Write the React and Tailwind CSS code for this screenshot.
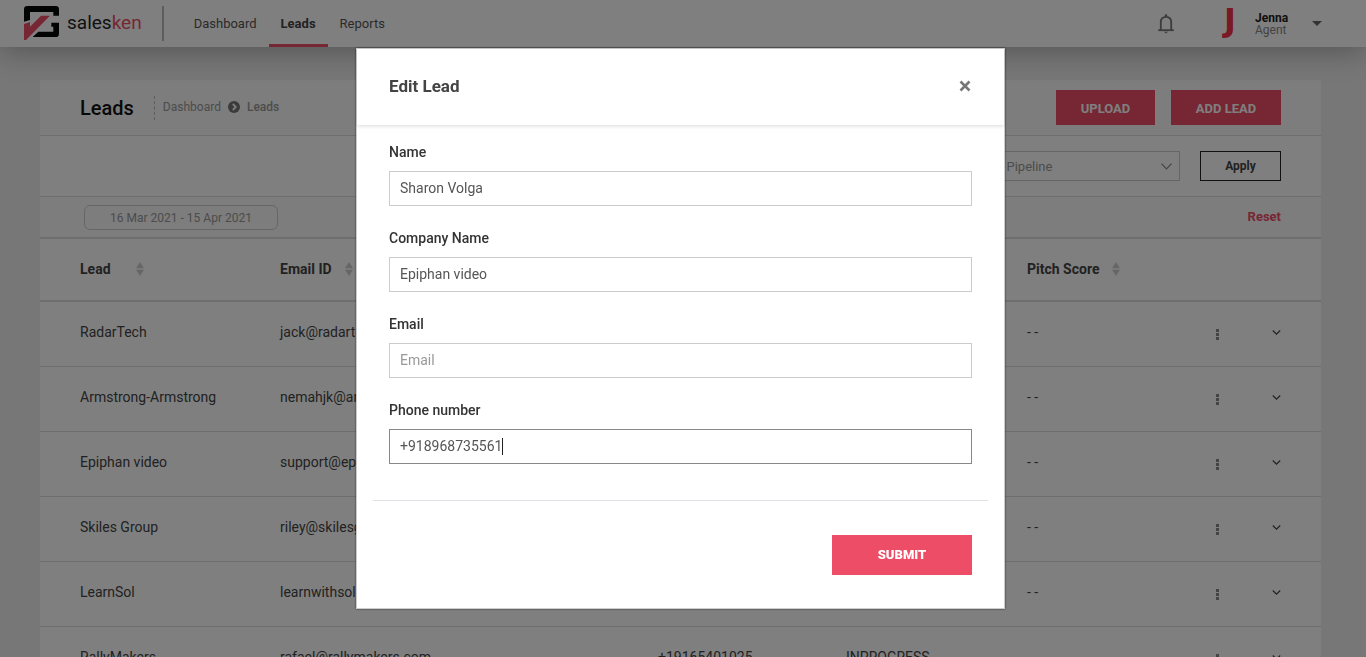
import React from "react";

const leads = [
  { name: "RadarTech", email: "jack@radartech.com", phone: "- -", status: "- -" },
  { name: "Armstrong-Armstrong", email: "nemahjk@armstrong.com", phone: "- -", status: "- -" },
  { name: "Epiphan video", email: "support@epiphan.com", phone: "- -", status: "- -" },
  { name: "Skiles Group", email: "riley@skilesgroup.com", phone: "- -", status: "- -" },
  { name: "LearnSol", email: "learnwithsol@learnsol.com", phone: "- -", status: "- -" },
  { name: "RallyMakers", email: "rafael@rallymakers.com", phone: "+19165401025", status: "INPROGRESS" },
];

function Logo() {
  return (
    <a href="#home" className="flex items-center gap-2" aria-label="salesken">
      <svg width="35" height="34" viewBox="0 0 105 102" aria-hidden="true">
        <path fill="#050808" d="M0 47V10Q0 0 10 0H95Q105 0 105 10V29H88V18H18V42Z" />
        <path fill="#050808" d="M82 50H105V83Q105 93 95 93H26L43 77H88V62H82Z" />
        <path fill="#ee4d67" d="M0 54L18 48V62L51 29H78L6 102H0Z" />
      </svg>
      <span className="text-[19px] leading-6 text-[#222]">
        sales<span className="text-[#ee4d67]">ken</span>
      </span>
    </a>
  );
}

function BellIcon() {
  return (
    <svg width="16" height="20" viewBox="0 0 16 20" fill="none" stroke="#777" strokeWidth="1.8" aria-hidden="true">
      <path d="M0.2 16.2H15.8" />
      <path d="M2.8 16V8.2C2.8 4.8 5 2.8 8 2.8S13.2 4.8 13.2 8.2V16" />
      <path d="M8 0.4V2.8" strokeWidth="2.4" />
      <path d="M6 17.8H10L8 19.6Z" fill="#777" stroke="none" />
    </svg>
  );
}

function SortIcon() {
  return (
    <svg width="8" height="14" viewBox="0 0 8 14" fill="#ccc" aria-hidden="true">
      <path d="M4 0L8 6.3H0ZM0 7.7H8L4 14Z" />
    </svg>
  );
}

function Header() {
  return (
    <header className="relative flex h-[47px] shrink-0 items-stretch bg-white pl-6 pr-11 shadow-[0_4px_30px_rgba(0,0,0,0.3)]">
      <div className="flex items-center pb-px">
        <Logo />
        <span className="ml-5 h-[35px] w-0.5 bg-[#bbb]" />
      </div>
      <nav className="ml-[18px] flex text-[13px] text-[#555]">
        <a href="#dashboard" className="flex items-center border-b-[3px] border-transparent px-3 pt-[3px]">Dashboard</a>
        <a href="#leads" className="flex items-center border-b-[3px] border-[#ee4d67] px-3 pt-[3px] font-bold text-[#444]">Leads</a>
        <a href="#reports" className="flex items-center border-b-[3px] border-transparent px-3 pt-[3px]">Reports</a>
      </nav>
      <div className="ml-auto flex items-center">
        <button type="button" aria-label="Notifications"><BellIcon /></button>
        <button type="button" className="ml-[50px] flex items-center text-left">
          <span className="w-[31px] pb-2 font-['DejaVu_Sans',sans-serif] text-[32px] font-bold leading-[38px] text-[#f5304c]">J</span>
          <span className="flex w-[57px] flex-col text-xs leading-3">
            <span className="font-bold text-[#222]">Jenna</span>
            <span className="text-[#888]">Agent</span>
          </span>
          <svg width="10" height="5" viewBox="0 0 10 5" fill="#666" aria-hidden="true"><path d="M0 0H10L5 5Z" /></svg>
        </button>
      </div>
    </header>
  );
}

function TitleBar() {
  return (
    <div className="flex h-14 items-center border-b border-[#ddd] bg-[#fafafa] px-10">
      <h1 className="text-xl font-medium text-[#111]">Leads</h1>
      <span className="ml-5 h-6 border-l border-dashed border-[#bbb]" />
      <nav aria-label="Breadcrumb" className="ml-2 flex items-center gap-[7px] pb-0.5 text-xs text-[#999]">
        <a href="#dashboard">Dashboard</a>
        <svg width="12" height="12" viewBox="0 0 12 12" aria-hidden="true">
          <circle cx="6" cy="6" r="6" fill="#777" />
          <path d="M4.8 3L7.8 6L4.8 9" fill="none" stroke="#fafafa" strokeWidth="1.8" />
        </svg>
        <a href="#leads" className="font-medium">Leads</a>
      </nav>
      <div className="ml-auto flex gap-4 text-[13px] font-bold text-white">
        <button type="button" className="h-[35px] w-[99px] bg-[#ee4d67] pt-0.5">UPLOAD</button>
        <button type="button" className="h-[35px] w-[110px] bg-[#ee4d67] pt-0.5">ADD LEAD</button>
      </div>
    </div>
  );
}

function Filters() {
  return (
    <>
      <div className="flex h-[61px] items-center justify-end gap-5 border-b border-[#ddd] px-10">
        <div className="relative flex items-center">
          <select aria-label="Pipeline" className="h-[30px] w-[200px] appearance-none border border-[#ccc] bg-transparent pl-2 pt-0.5 text-[13px] text-[#999]">
            <option>By Pipeline</option>
          </select>
          <svg className="pointer-events-none absolute right-2" width="11" height="7" viewBox="0 0 11 7" fill="none" stroke="#888" strokeWidth="1.2" aria-hidden="true">
            <path d="M0.5 0.7L5.5 5.8L10.5 0.7" />
          </svg>
        </div>
        <button type="button" className="h-[30px] w-[81px] border border-[#222] text-xs font-bold text-[#444]">Apply</button>
      </div>
      <div className="flex h-[42px] items-center justify-between border-b-2 border-[#ddd] bg-[#fafafa] pl-11 pr-10">
        <button type="button" className="h-[25px] w-[194px] rounded-md border border-[#ccc] pt-px text-xs text-[#999]">
          16 Mar 2021 - 15 Apr 2021
        </button>
        <button type="button" className="text-[13px] font-bold text-[#ee4d67]">Reset</button>
      </div>
    </>
  );
}

function HeadCell({ label, wide, first }) {
  return (
    <th scope="col" className={first ? "pb-1 pl-10 font-bold" : "pb-1 font-bold"}>
      <span className={wide ? "flex items-center gap-[25px]" : "flex items-center gap-[13px]"}>
        {label}
        <SortIcon />
      </span>
    </th>
  );
}

function LeadsTable() {
  return (
    <table className="w-full table-fixed border-collapse text-left text-sm text-[#444]">
      <colgroup>
        <col className="w-[240px]" />
        <col className="w-[378px]" />
        <col className="w-[188px]" />
        <col />
        <col className="w-[175px]" />
        <col className="w-[59px]" />
        <col className="w-[60px]" />
      </colgroup>
      <thead>
        <tr className="h-[63px] shadow-[inset_0_-2px_#ddd]">
          <HeadCell label="Lead" wide first />
          <HeadCell label="Email ID" />
          <HeadCell label="Phone" />
          <HeadCell label="Status" />
          <HeadCell label="Pitch Score" />
          <th aria-label="Actions" />
          <th aria-label="Expand" />
        </tr>
      </thead>
      <tbody>
        {leads.map((lead) => (
          <tr key={lead.name} className="h-[65px] shadow-[inset_0_-1px_#ddd]">
            <td className="pb-1.5 pl-10">{lead.name}</td>
            <td className="pb-1.5">{lead.email}</td>
            <td className="pb-1.5">{lead.phone}</td>
            <td className="pb-1.5">{lead.status}</td>
            <td className="pb-1.5">- -</td>
            <td>
              <button type="button" aria-label={`Actions for ${lead.name}`} className="ml-3.5 flex w-[3px] flex-col gap-px">
                <span className="size-[3px] bg-[#888]" />
                <span className="size-[3px] bg-[#888]" />
                <span className="size-[3px] bg-[#888]" />
              </button>
            </td>
            <td className="pb-1">
              <button type="button" aria-label={`Expand ${lead.name}`} className="ml-[11px] flex">
                <svg width="9" height="5" viewBox="0 0 9 5" fill="none" stroke="#444" strokeWidth="1.2" aria-hidden="true">
                  <path d="M0.8 0.5L4.5 4.1L8.2 0.5" />
                </svg>
              </button>
            </td>
          </tr>
        ))}
      </tbody>
    </table>
  );
}

const inputClass = "h-[35px] w-full border border-[#ccc] px-2.5 pb-0.5 text-sm text-[#555] placeholder:text-[#999] outline-none focus:border-[#888]";

function Field({ id, label, type = "text", value, placeholder, active }) {
  return (
    <div className="flex flex-col gap-[9px]">
      <label htmlFor={id} className="text-sm font-medium leading-5 text-[#333]">{label}</label>
      <div className="relative flex items-center">
        <input
          id={id}
          type={type}
          defaultValue={value}
          placeholder={placeholder}
          autoFocus={active}
          className={active ? inputClass + " caret-transparent" : inputClass}
        />
        {active && <span className="absolute left-[113px] h-[17px] w-px bg-[#222]" />}
      </div>
    </div>
  );
}

function EditLeadDialog() {
  return (
    <div className="fixed inset-0 flex items-start justify-center bg-black/50 pr-[5px] pt-12">
      <form role="dialog" aria-labelledby="edit-lead-title" className="w-full max-w-[649px] border border-[#ccc] bg-white shadow-[0_0_2px_rgba(0,0,0,0.6)]">
        <div className="flex h-[76px] items-center justify-between px-8 shadow-[0_1px_4px_rgba(0,0,0,0.15)]">
          <h2 id="edit-lead-title" className="text-[17px] font-bold text-[#444]">Edit Lead</h2>
          <button type="button" aria-label="Close" className="mr-px pb-0.5">
            <svg width="12" height="12" viewBox="0 0 12 12" stroke="#777" strokeWidth="2.6" aria-hidden="true">
              <path d="M1.5 1.5L10.5 10.5M10.5 1.5L1.5 10.5" />
            </svg>
          </button>
        </div>
        <div className="flex flex-col gap-[22px] px-8 pb-9 pt-[17px]">
          <Field id="lead-name" label="Name" value="Sharon Volga" />
          <Field id="company-name" label="Company Name" value="Epiphan video" />
          <Field id="email" label="Email" type="email" placeholder="Email" />
          <Field id="phone" label="Phone number" type="tel" value="+918968735561" active />
        </div>
        <div className="mx-4 flex justify-end border-t border-[#dee2e6] px-4 pb-[33px] pt-[34px]">
          <button type="submit" className="h-10 w-[140px] bg-[#ee4d67] text-[13px] font-black text-white">SUBMIT</button>
        </div>
      </form>
    </div>
  );
}

export default function App() {
  return (
    <div className="flex h-screen flex-col overflow-hidden bg-[#eee] font-[Roboto,sans-serif]">
      <Header />
      <main className="pb-10 pl-10 pr-[45px] pt-[33px]">
        <section className="bg-white">
          <TitleBar />
          <Filters />
          <LeadsTable />
        </section>
      </main>
      <EditLeadDialog />
    </div>
  );
}
